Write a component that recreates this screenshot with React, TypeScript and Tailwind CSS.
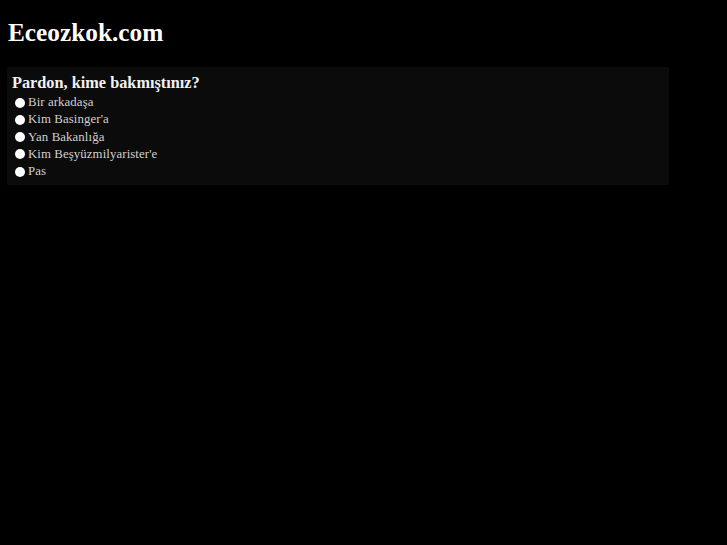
const options = ['Bir arkadaşa', "Kim Basinger'a", 'Yan Bakanlığa', "Kim Beşyüzmilyarister'e", 'Pas']

export default function App() {
  return (
    <div className="min-h-screen bg-black px-[7px] pt-[16px] font-['Liberation_Serif',serif] text-white">
      <h1 className="pl-px text-[25.3px] font-bold leading-[32px]">Eceozkok.com</h1>

      <div className="mt-[19px] w-[662px] bg-[#0b0b0b] px-[5px] pt-[6px] pb-[5px]">
        <h2 className="text-[16.3px] font-bold leading-[20px] text-[#f2f2f2]">Pardon, kime bakmıştınız?</h2>
        <ul className="mt-px pl-[3px]">
          {options.map((o) => (
            <li key={o} className="flex h-[17.25px] items-center gap-[3px] text-[12.8px] tracking-[0.1px] text-[#cfcfcf]">
              <span className="h-[10px] w-[10px] rounded-full bg-white" />
              {o}
            </li>
          ))}
        </ul>
      </div>
    </div>
  )
}
